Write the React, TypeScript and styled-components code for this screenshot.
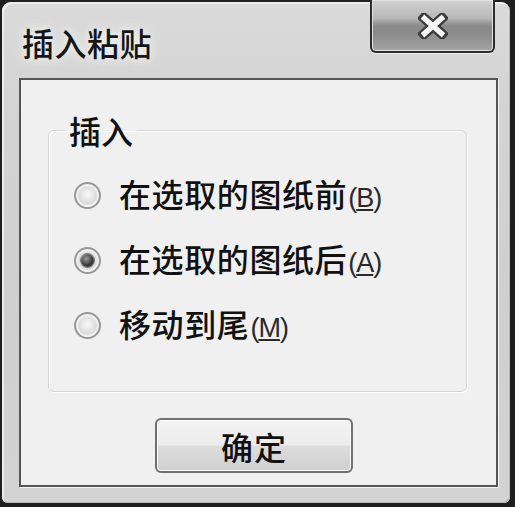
import { createGlobalStyle, styled } from "styled-components";

const GlobalStyle = createGlobalStyle`
  html, body {
    margin: 0;
    padding: 0;
    background: #1f1f1f;
  }
  body {
    font-family: "Noto Sans CJK SC", "Noto Sans", sans-serif;
  }
`;

const Page = styled.div`
  width: 515px;
  height: 507px;
  box-sizing: border-box;
  padding: 2px 5px 4px 2px;
  background: #1f1f1f;
  display: flex;
`;

const Frame = styled.div`
  flex: 1;
  display: flex;
  flex-direction: column;
  padding: 0 12px 16px 17px;
  border-radius: 9px 9px 6px 6px;
  background: linear-gradient(180deg, #dadada 0%, #d4d4d4 20%, #cfcfcf 60%, #d3d3d3 100%);
  box-shadow: inset 2px 2px 0 #ececec, inset -1px -1px 0 #b8b8b8;
`;

const TitleBar = styled.div`
  height: 76px;
  display: flex;
  justify-content: space-between;
  align-items: flex-start;
`;

const Title = styled.div`
  margin: 24px 0 0 3px;
  font-size: 32px;
  line-height: 32px;
  font-weight: 500;
  color: #151515;
  letter-spacing: 0.5px;
  text-shadow: 0 0 8px #f4f4f4, 0 0 14px #eeeeee;
`;

const CloseButton = styled.div`
  margin: -2px 3px 0 0;
  width: 125px;
  height: 53px;
  box-sizing: border-box;
  border: 2px solid #2d2d2d;
  border-top: none;
  border-radius: 0 0 6px 6px;
  background: linear-gradient(
    180deg,
    #d2d2d2 0%,
    #b8b8b8 35%,
    #8c8c8c 50%,
    #8a8a8a 65%,
    #a4a4a4 100%
  );
  box-shadow: inset 0 0 0 1px #e2e2e2, 0 1px 0 #eeeeee;
  display: flex;
  align-items: center;
  justify-content: center;
`;

const Client = styled.div`
  flex: 1;
  display: flex;
  flex-direction: column;
  align-items: flex-start;
  border: 2px solid #555555;
  background: #f0f0f0;
  box-shadow: 1px 1px 0 #f6f6f6;
`;

const GroupBox = styled.fieldset`
  align-self: stretch;
  margin: 33px 29px 0 27px;
  padding: 16px 0 33px 0;
  border: 1px solid #d4d4d4;
  border-radius: 6px;
  box-shadow: inset 1px 1px 0 #ffffff, 1px 1px 0 #ffffff;
  display: flex;
  flex-direction: column;
`;

const Legend = styled.legend`
  margin-left: 16px;
  padding: 0 4px;
  font-size: 32px;
  line-height: 34px;
  font-weight: 500;
  color: #111;
`;

const Option = styled.label`
  height: 65px;
  margin-left: 25px;
  display: flex;
  align-items: center;
  gap: 18px;
  font-size: 32px;
  line-height: 34px;
  font-weight: 500;
  color: #111;
  letter-spacing: 0.6px;
`;

const Radio = styled.span<{ $checked?: boolean }>`
  position: relative;
  flex: none;
  width: 27px;
  height: 27px;
  box-sizing: border-box;
  border-radius: 50%;
  border: 2px solid #989898;
  background: radial-gradient(circle at 50% 45%, #f8f8f8 0%, #e0e0e0 45%, #c0c0c0 100%);
  box-shadow: inset 0 0 0 2px #f2f2f2;

  &::after {
    content: "";
    display: ${(p) => (p.$checked ? "block" : "none")};
    position: absolute;
    left: 5px;
    top: 5px;
    width: 13px;
    height: 13px;
    border-radius: 50%;
    background: radial-gradient(circle at 40% 35%, #9a9a9a 0%, #3c3c3c 55%, #1e1e1e 100%);
    box-shadow: 0 0 0 1px #7a7a7a;
  }
`;

const Mnemonic = styled.span`
  font-family: "Liberation Sans", "Noto Sans", sans-serif;
  font-size: 27px;
  letter-spacing: -1px;
  color: #2a2a2a;
  margin-left: 1px;

  u {
    text-decoration-thickness: 2px;
    text-underline-offset: 2px;
  }
`;

const OkButton = styled.button`
  margin: 26px 0 0 134px;
  width: 198px;
  height: 55px;
  box-sizing: border-box;
  border: 2px solid #707070;
  border-radius: 6px;
  background: linear-gradient(180deg, #f4f4f4 0%, #ececec 48%, #dcdcdc 52%, #d0d0d0 100%);
  box-shadow: inset 0 0 0 1px #fbfbfb;
  font-family: "Noto Sans CJK SC", sans-serif;
  font-size: 32px;
  font-weight: 500;
  line-height: 34px;
  color: #111;
  letter-spacing: 1px;
  padding: 0;
`;

const options = [
  { text: "在选取的图纸前", key: "B", checked: false },
  { text: "在选取的图纸后", key: "A", checked: true },
  { text: "移动到尾", key: "M", checked: false },
];

const CloseIcon = () => (
  <svg width="30" height="26" viewBox="0 0 30 26">
    <path d="M6 5 L24 21 M24 5 L6 21" stroke="#3a3a3a" strokeWidth="10" strokeLinecap="square" fill="none" />
    <path d="M6.5 5.5 L23.5 20.5 M23.5 5.5 L6.5 20.5" stroke="#f6f6f6" strokeWidth="5.5" strokeLinecap="square" fill="none" />
  </svg>
);

export default function App() {
  return (
    <>
      <GlobalStyle />
      <Page>
        <Frame>
          <TitleBar>
            <Title>插入粘贴</Title>
            <CloseButton>
              <CloseIcon />
            </CloseButton>
          </TitleBar>
          <Client>
            <GroupBox>
              <Legend>插入</Legend>
              {options.map((o) => (
                <Option key={o.key}>
                  <Radio $checked={o.checked} />
                  <span>
                    {o.text}
                    <Mnemonic>
                      (<u>{o.key}</u>)
                    </Mnemonic>
                  </span>
                </Option>
              ))}
            </GroupBox>
            <OkButton>确定</OkButton>
          </Client>
        </Frame>
      </Page>
    </>
  );
}
